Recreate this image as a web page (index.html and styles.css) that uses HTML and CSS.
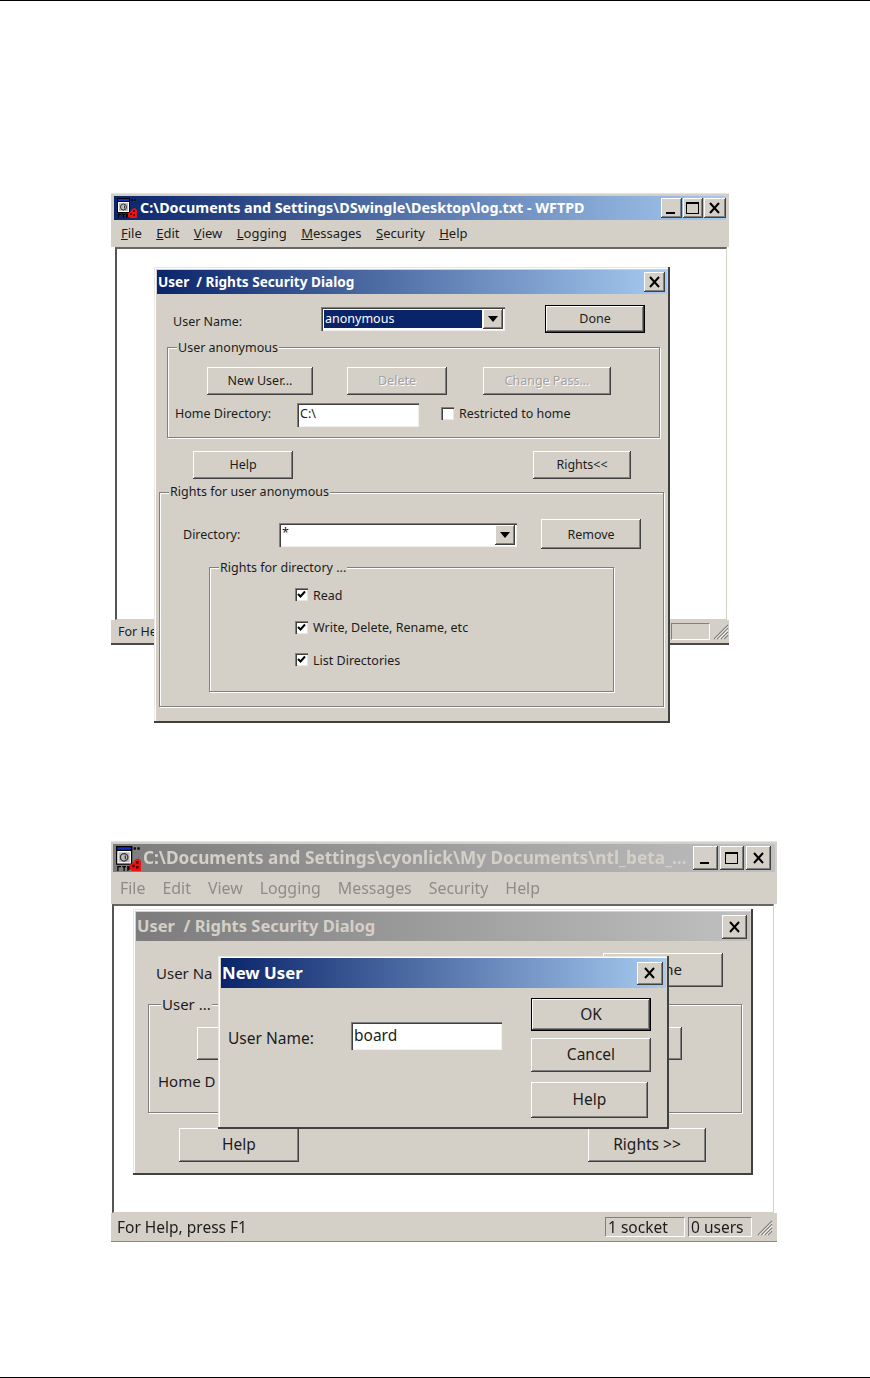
FILE: index.html
```html
<!DOCTYPE html>
<html lang="en">
<head>
<meta charset="utf-8">
<title>WFTPD user security dialogs</title>
<link rel="stylesheet" href="styles.css">
</head>
<body>
<svg class="defs" width="0" height="0" aria-hidden="true">
  <symbol id="app" viewBox="0 0 20 20">
    <rect x="0.500" y="0.500" width="12" height="14" fill="#fff" stroke="#000"/>
    <rect x="0.500" y="0.500" width="12" height="3" fill="#1030c0" stroke="#000"/>
    <rect x="2" y="5" width="9" height="8" fill="#bdbdbd"/>
    <circle cx="6.500" cy="9" r="3" fill="none" stroke="#333" stroke-width="1"/>
    <path d="M7.500 7.500v3" stroke="#333"/>
    <path d="M14 1h2v2h-2zM17 1h2v2h-2z" fill="#111"/>
    <path d="M1 16h3v1h-2v3h-1zM5 16h3v1h-1v3h-1v-3h-1zM9 16h2v3h-1v1h-1z" fill="#000"/>
    <path d="M11 15l3-2 1-2 3-1 2 2v8h-7l-1-1h-1z" fill="#ee1111"/>
    <path d="M13 15h2v2h-2zM16 12h2v2h-2zM16 16h2v2h-2z" fill="#400"/>
  </symbol>
  <symbol id="x" viewBox="0 0 16 14">
    <path d="M3 2l9 10M12 2L3 12" fill="none" stroke="#000" stroke-width="2"/>
  </symbol>
  <symbol id="chk" viewBox="0 0 9 9">
    <path d="M1 4l2.500 2.500L8 1.500" fill="none" stroke="#000" stroke-width="2"/>
  </symbol>
  <symbol id="grip" viewBox="0 0 18 18">
    <path d="M17 3L3 17M17 6L6 17M17 10L10 17M17 13L13 17" fill="none" stroke="#808080" stroke-width="1.200"/>
    <path d="M17 4.500L4.500 17M17 8L8 17M17 11.500L11.500 17" fill="none" stroke="#fff" stroke-width="1"/>
  </symbol>
</svg>

<div class="page">
  <div class="win win1">
    <div class="title title-on">
      <svg class="app"><use href="#app"/></svg>
      <span class="title-text">C:\Documents and Settings\DSwingle\Desktop\log.txt - WFTPD</span>
      <div class="caps">
        <span class="cap cap-min"><i class="min-mark"></i></span>
        <span class="cap cap-max"><i class="max-mark"></i></span>
        <span class="cap cap-close"><svg class="x"><use href="#x"/></svg></span>
      </div>
    </div>
    <div class="menu">
      <span><u>F</u>ile</span><span><u>E</u>dit</span><span><u>V</u>iew</span><span><u>L</u>ogging</span><span><u>M</u>essages</span><span><u>S</u>ecurity</span><span><u>H</u>elp</span>
    </div>
    <div class="client"><div class="well"></div></div>
    <div class="status">
      <span class="status-msg">For Help, press F1</span>
      <span class="pane pane-a"></span>
      <svg class="grip"><use href="#grip"/></svg>
    </div>

    <div class="dlg dlg-rights">
      <div class="title title-on dlg-title">
        <span class="title-text">User&nbsp; / Rights Security Dialog</span>
        <span class="cap cap-close dlg-close"><svg class="x"><use href="#x"/></svg></span>
      </div>
      <div class="row r-user">
        <span class="lab lab-user">User Name:</span>
        <div class="combo combo-user"><span class="combo-sel">anonymous</span><span class="drop"><i></i></span></div>
        <button class="btn btn-def b-done">Done</button>
      </div>
      <div class="group g-user">
        <span class="legend">User anonymous</span>
        <div class="row r-ubtns">
          <button class="btn b-new">New User...</button>
          <button class="btn off b-del">Delete</button>
          <button class="btn off b-pass">Change Pass...</button>
        </div>
        <div class="row r-home">
          <span class="lab lab-home">Home Directory:</span>
          <div class="field f-home">C:\</div>
          <span class="box box-home"></span>
          <span class="lab lab-restrict">Restricted to home</span>
        </div>
      </div>
      <div class="row r-help">
        <button class="btn b-help">Help</button>
        <button class="btn b-rights">Rights&lt;&lt;</button>
      </div>
      <div class="group g-rights">
        <span class="legend">Rights for user anonymous</span>
        <div class="row r-dir">
          <span class="lab lab-dir">Directory:</span>
          <div class="combo combo-dir"><span class="combo-txt">*</span><span class="drop"><i></i></span></div>
          <button class="btn b-remove">Remove</button>
        </div>
        <div class="group g-dir">
          <span class="legend">Rights for directory ...</span>
          <div class="checks">
            <div class="check"><span class="box"><svg class="chk"><use href="#chk"/></svg></span><span class="lab">Read</span></div>
            <div class="check"><span class="box"><svg class="chk"><use href="#chk"/></svg></span><span class="lab">Write, Delete, Rename, etc</span></div>
            <div class="check"><span class="box"><svg class="chk"><use href="#chk"/></svg></span><span class="lab">List Directories</span></div>
          </div>
        </div>
      </div>
    </div>
  </div>

  <div class="win win2">
    <div class="title title-off">
      <svg class="app"><use href="#app"/></svg>
      <span class="title-text">C:\Documents and Settings\cyonlick\My Documents\ntl_beta_...</span>
      <div class="caps">
        <span class="cap cap-min"><i class="min-mark"></i></span>
        <span class="cap cap-max"><i class="max-mark"></i></span>
        <span class="cap cap-close"><svg class="x"><use href="#x"/></svg></span>
      </div>
    </div>
    <div class="menu menu-off">
      <span>File</span><span>Edit</span><span>View</span><span>Logging</span><span>Messages</span><span>Security</span><span>Help</span>
    </div>
    <div class="client"><div class="well"></div></div>
    <div class="status">
      <span class="status-msg">For Help, press F1</span>
      <span class="pane pane-b">1 socket</span>
      <span class="pane pane-c">0 users</span>
      <svg class="grip"><use href="#grip"/></svg>
    </div>

    <div class="dlg dlg-back">
      <div class="title title-off dlg-title">
        <span class="title-text">User&nbsp; / Rights Security Dialog</span>
        <span class="cap cap-close dlg-close"><svg class="x"><use href="#x"/></svg></span>
      </div>
      <div class="row r2-user">
        <span class="lab lab2-user">User Na</span>
        <button class="btn b2-done">Done</button>
      </div>
      <div class="group g2-user">
        <span class="legend">User ...</span>
        <div class="row r2-btns">
          <button class="btn b2-new"></button>
        </div>
        <div class="row r2-home"><span class="lab">Home D</span></div>
      </div>
      <div class="row r2-help">
        <button class="btn b2-help">Help</button>
        <button class="btn b2-rights">Rights &gt;&gt;</button>
      </div>
    </div>

    <div class="dlg dlg-new">
      <div class="title title-on dlg-title">
        <span class="title-text">New User</span>
        <span class="cap cap-close dlg-close"><svg class="x"><use href="#x"/></svg></span>
      </div>
      <div class="new-body">
        <div class="row new-left">
          <span class="lab lab-new">User Name:</span>
          <div class="field f-new">board</div>
        </div>
        <div class="new-btns">
          <button class="btn btn-def b3-ok">OK</button>
          <button class="btn b3-cancel">Cancel</button>
          <button class="btn b3-help">Help</button>
        </div>
      </div>
    </div>
  </div>

  <div class="foot"></div>
</div>
</body>
</html>
```

FILE: styles.css
```css
* { box-sizing: border-box; }
html, body { margin: 0; padding: 0; background: #fff; }
body { font-family: "Noto Sans", "Liberation Sans", sans-serif; color: #1c1c1c; overflow: hidden; }
.defs { position: absolute; }
.page { width: 870px; height: 1378px; border-top: 1px solid #000; }
.foot { margin-top: 135px; border-top: 1px solid #000; }

/* windows */
.win { position: relative; background: #d4d0c8; margin-left: 111px; }
.win1 { width: 618px; height: 451px; margin-top: 193px; font-size: 12.5px; padding-top: 2px; border-bottom: 2px solid #4a4a4a; box-shadow: 0 -1px #e6e4df; }
.win2 { width: 666px; height: 400px; margin-top: 197px; font-size: 15.5px; padding-top: 2px; filter: blur(0.35px); border-bottom: 1px solid #8a8a8a; box-shadow: 0 -1px #e6e4df; }

.title { display: flex; align-items: center; color: #fff; font-weight: 700; white-space: nowrap; }
.title-text { position: relative; top: -1px; }
.title-on { background: linear-gradient(90deg, #0a246a, #a6caf0); }
.title-off { background: linear-gradient(90deg, #7c7c7c, #c0c0c0); color: #d4d0c8; }
.win1 > .title { height: 24px; margin: 0 3px; padding: 0 0 0 3px; font-size: 14.3px; }
.win2 > .title { height: 28px; margin: 0 2px; padding: 0 4px 0 3px; font-size: 17.2px; }
.app { flex: none; }
.win1 > .title .app { width: 20px; height: 20px; margin-right: 3px; }
.win2 > .title .app { width: 25px; height: 25px; margin-right: 2px; }
.caps { margin-left: auto; display: flex; gap: 1px; }
.win2 .caps { gap: 2px; }
.cap { display: flex; align-items: center; justify-content: center; position: relative; background: #d4d0c8; box-shadow: inset -1px -1px #404040, inset 1px 1px #fff, inset -2px -2px #808080; }
.win1 .cap-min { width: 21px; height: 20px; }
.win1 .cap-max { width: 20px; height: 20px; }
.win1 .cap-close { width: 22px; height: 20px; }
.win2 .cap-min { width: 25px; height: 24px; }
.win2 .cap-max { width: 24px; height: 24px; }
.win2 .cap-close { width: 25px; height: 24px; }
.x { width: 16px; height: 14px; }
.min-mark { width: 9px; height: 2px; background: #000; margin-top: 9px; margin-right: 2px; }
.max-mark { width: 13px; height: 12px; border: 1px solid #000; border-top-width: 2px; margin-right: 1px; }

.menu { display: flex; align-items: center; }
.win1 .menu { height: 27px; gap: 14.4px; padding: 0 0 2px 10px; font-size: 13px; }
.win2 .menu { height: 32px; gap: 17px; padding-left: 9px; font-size: 15.9px; }
.menu-off { color: #8d8d88; }

.client { background: #fff; }
.win1 .client { height: 373px; padding: 0 2px 0 4px; }
.win2 .client { height: 309px; padding: 0 3px 0 1px; }
.well { height: 100%; background: #fff; border-left: 2px solid #555; border-top: 2px solid #666; border-right: 1px solid #d4d0c8; border-bottom: 1px solid #d4d0c8; }

.status { display: flex; align-items: center; position: relative; }
.win1 .status { height: 22px; padding-left: 7px; }
.win2 .status { height: 28px; padding-left: 6px; }
.status-msg { margin-right: auto; }
.pane { border: 1px solid; border-color: #808080 #fff #fff #808080; display: block; padding-left: 2px; white-space: nowrap; }
.pane-a { width: 39px; height: 17px; margin-right: 1px; }
.pane-b { width: 80px; height: 20px; line-height: 18px; margin-right: 3px; }
.pane-c { width: 64px; height: 20px; line-height: 18px; margin-right: 3px; }
.grip { flex: none; width: 18px; height: 18px; }
.win2 .grip { margin-right: 4px; }

/* dialogs lying over their window */
.dlg { position: absolute; background: #d4d0c8; padding: 3px; box-shadow: inset -2px -2px #404040, inset 1px 1px #e9e7e3, inset 2px 2px #fff; }
.dlg-rights { left: 43px; top: 73px; width: 516px; height: 456px; }
.dlg-back { left: 22px; top: 67px; width: 620px; height: 266px; font-size: 15px; }
.dlg-new { left: 107px; top: 114px; width: 451px; height: 173px; padding-top: 2px; z-index: 2; }
.dlg-title { padding: 0 3px 0 1px; justify-content: space-between; }
.dlg-rights .dlg-title { height: 24px; font-size: 13.6px; padding-right: 2px; }
.dlg-back .dlg-title { height: 29px; font-size: 16.5px; }
.dlg-new .dlg-title { height: 30px; font-size: 16.8px; }
.dlg-rights .dlg-close { width: 21px; height: 20px; }
.dlg-back .dlg-close { width: 25px; height: 24px; }
.dlg-new .dlg-close { width: 26px; height: 23px; }

/* controls */
.row { display: flex; align-items: center; }
.lab { white-space: nowrap; flex: none; }
.btn { display: block; flex: none; font: inherit; color: inherit; padding: 0 0 2px; border: 0; background: #d4d0c8; box-shadow: inset -1px -1px #404040, inset 1px 1px #fff, inset -2px -2px #808080; }
.btn-def { box-shadow: 0 0 0 1px #000 inset, inset -2px -2px #404040, inset 2px 2px #fff, inset -3px -3px #808080; }
.off { color: #a3a29d; text-shadow: 1px 1px #fff; }
.field { background: #fff; box-shadow: inset 1px 1px #808080, inset 2px 2px #404040, inset -1px -1px #f2f0ec; padding: 2px 0 0 3px; flex: none; }
.combo { position: relative; flex: none; background: #fff; box-shadow: inset 1px 1px #808080, inset 2px 2px #404040, inset -1px -1px #f2f0ec; display: flex; padding: 2px; }
.combo-sel { flex: 1; background: #0a246a; color: #fff; margin: 1px; padding-left: 1px; line-height: 17px; }
.combo-txt { flex: 1; padding-left: 1px; line-height: 16px; }
.drop { flex: none; width: 20px; display: flex; align-items: center; justify-content: center; background: #d4d0c8; box-shadow: inset -1px -1px #404040, inset 1px 1px #fff, inset -2px -2px #808080; }
.drop i { width: 0; height: 0; border: 5px solid transparent; border-top: 6px solid #000; border-bottom: 0; }
.box { flex: none; width: 13px; height: 13px; display: block; background: #fff; box-shadow: inset 1px 1px #808080, inset 2px 2px #404040, inset -1px -1px #e8e6e2; padding: 2px; }
.chk { display: block; width: 9px; height: 9px; }

.group { position: relative; border: 1px solid #808080; box-shadow: inset 1px 1px #fff, 1px 1px #fff; }
.legend { position: absolute; top: -9px; left: 9px; padding: 0 1px; line-height: 17px; background: #d4d0c8; white-space: nowrap; }

/* rights dialog, flowing from the title bar down */
.r-user { height: 28px; margin-top: 11px; }
.lab-user { width: 164px; padding: 4px 0 0 16px; }
.combo-user { width: 184px; height: 24px; }
.b-done { width: 100px; height: 28px; margin-left: 40px; }
.g-user { margin: 14px 0 0 10px; width: 493px; height: 91px; padding-top: 19px; }
.r-ubtns { margin-left: 39px; }
.b-new { width: 106px; height: 28px; }
.b-del { width: 100px; height: 28px; margin-left: 34px; }
.b-pass { width: 128px; height: 28px; margin-left: 36px; }
.r-home { margin: 8px 0 0 7px; }
.lab-home { width: 122px; padding-bottom: 4px; }
.lab-restrict { padding-bottom: 4px; }
.f-home { width: 122px; height: 24px; }
.box-home { margin: 0 5px 4px 22px; }
.r-help { margin: 13px 0 0 36px; }
.b-help { width: 100px; height: 28px; }
.b-rights { width: 98px; height: 28px; margin-left: 240px; }
.g-rights { margin: 13px 0 0 2px; width: 505px; height: 215px; }
.g-rights > .legend { top: -10px; }
.r-dir { margin: 26px 0 0 23px; align-items: flex-start; }
.lab-dir { width: 96px; margin-top: 7px; }
.combo-dir { width: 238px; height: 24px; margin-top: 4px; }
.b-remove { width: 100px; height: 30px; margin-left: 24px; padding-bottom: 0; }
.g-dir { margin: 18px 0 0 49px; width: 405px; height: 125px; }
.checks { padding: 20px 0 0 85px; display: flex; flex-direction: column; gap: 19.5px; }
.check { display: flex; align-items: center; height: 13px; gap: 5px; }
.check .lab { padding-top: 1px; }

/* background dialog of the second shot */
.r2-user { height: 34px; margin-top: 12px; }
.lab2-user { width: 467px; padding: 5px 0 0 20px; }
.b2-done { width: 120px; height: 34px; }
.g2-user { margin: 17px 0 0 12px; width: 594px; height: 109px; padding-top: 22px; }
.g2-user .legend { left: 12px; }
.r2-btns { margin-left: 48px; }
.b2-new { width: 485px; height: 33px; }
.r2-home { margin: 11px 0 0 9px; }
.r2-help { margin: 15px 0 0 43px; }
.b2-help { width: 120px; height: 34px; font-size: 15.5px; }
.b2-rights { width: 118px; height: 34px; margin-left: 289px; font-size: 15.5px; }

/* new user dialog */
.new-body { display: flex; align-items: flex-start; }
.new-left { margin: 34px 0 0 7px; width: 303px; align-items: flex-start; }
.lab-new { width: 123px; margin-top: 5px; }
.f-new { width: 151px; height: 28px; }
.new-btns { margin-top: 10px; }
.b3-ok { width: 120px; height: 33px; }
.b3-cancel { width: 120px; height: 34px; margin-top: 7px; }
.b3-help { width: 117px; height: 36px; margin-top: 10px; }
```
